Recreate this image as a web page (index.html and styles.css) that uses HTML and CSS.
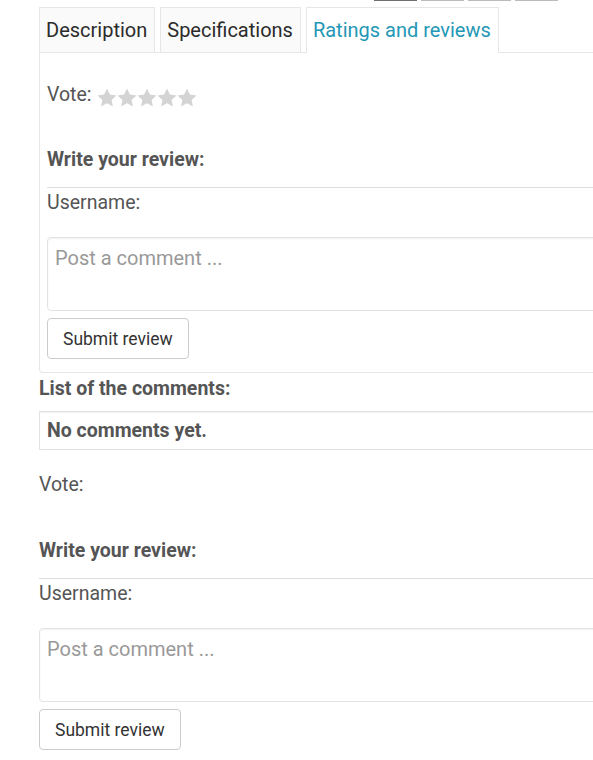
FILE: index.html
```html
<!DOCTYPE html>
<html lang="en">
<head>
    <meta charset="UTF-8">
    <meta name="viewport" content="width=device-width, initial-scale=1.0">
    <title>Ratings and reviews</title>
    <link rel="stylesheet" href="styles.css">
</head>
<body>
    <div class="page">
        <!-- thumbnail pager bars from the gallery above -->
        <div class="pager">
            <span class="pager-bar active"></span>
            <span class="pager-bar"></span>
            <span class="pager-bar"></span>
            <span class="pager-bar"></span>
        </div>

        <ul class="tabs">
            <li class="tab">Description</li>
            <li class="tab">Specifications</li>
            <li class="tab active">Ratings and reviews</li>
        </ul>

        <div class="tab-panel">
            <div class="vote">Vote:
                <span class="stars">
                    <svg viewBox="0 0 20 20"><path d="M10 .6l2.9 6 6.6.8-4.9 4.5 1.3 6.6L10 15.2l-5.9 3.3 1.3-6.6L.5 7.4l6.6-.8z"/></svg>
                    <svg viewBox="0 0 20 20"><path d="M10 .6l2.9 6 6.6.8-4.9 4.5 1.3 6.6L10 15.2l-5.9 3.3 1.3-6.6L.5 7.4l6.6-.8z"/></svg>
                    <svg viewBox="0 0 20 20"><path d="M10 .6l2.9 6 6.6.8-4.9 4.5 1.3 6.6L10 15.2l-5.9 3.3 1.3-6.6L.5 7.4l6.6-.8z"/></svg>
                    <svg viewBox="0 0 20 20"><path d="M10 .6l2.9 6 6.6.8-4.9 4.5 1.3 6.6L10 15.2l-5.9 3.3 1.3-6.6L.5 7.4l6.6-.8z"/></svg>
                    <svg viewBox="0 0 20 20"><path d="M10 .6l2.9 6 6.6.8-4.9 4.5 1.3 6.6L10 15.2l-5.9 3.3 1.3-6.6L.5 7.4l6.6-.8z"/></svg>
                </span>
            </div>
            <form class="review-form">
                <h4 class="form-title">Write your review:</h4>
                <hr class="divider">
                <label class="username">Username:</label>
                <textarea class="comment-box" placeholder="Post a comment ..."></textarea>
                <button type="button" class="submit-btn">Submit review</button>
            </form>
        </div>

        <h4 class="list-title">List of the comments:</h4>
        <div class="comments-box">No comments yet.</div>

        <!-- same form repeated below the list, no stars here -->
        <div class="vote vote-plain">Vote:</div>
        <form class="review-form">
            <h4 class="form-title">Write your review:</h4>
            <hr class="divider">
            <label class="username">Username:</label>
            <textarea class="comment-box" placeholder="Post a comment ..."></textarea>
            <button type="button" class="submit-btn">Submit review</button>
        </form>
    </div>
</body>
</html>
```

FILE: styles.css
```css
html, body {
    overflow: hidden;
}
body {
    margin: 0;
    font-family: Roboto, "Liberation Sans", sans-serif;
    color: #555;
    background: #fff;
}
.page {
    width: 640px;
    padding-left: 39px;
}
.pager {
    display: flex;
    gap: 4px;
    margin-left: 335px;
    height: 1px;
}
.pager-bar {
    width: 43px;
    height: 1px;
    background: #bbb;
}
.pager-bar.active {
    background: #6f6f6f;
}
.tabs {
    display: flex;
    list-style: none;
    margin: 6px 0 0;
    padding: 0;
    border-bottom: 1px solid #e6e6e6;
    gap: 5px;
}
.tab {
    height: 44px;
    line-height: 45px;
    padding: 0 7px 0 6px;
    font-size: 20px;
    color: #2b2b2b;
    background: #fafafa;
    border: 1px solid #e6e6e6;
    border-bottom: none;
    margin-bottom: -1px;
}
.tab.active {
    color: #2497b6;
    background: #fff;
    height: 45px;
}
.tab-panel {
    border: 1px solid #e6e6e6;
    border-top: none;
    border-radius: 0 0 4px 4px;
    padding: 29px 7px 13px;
}
.vote {
    font-size: 19.5px;
    line-height: 26px;
    display: flex;
    align-items: center;
    gap: 5px;
}
.stars {
    display: flex;
    margin-top: 6px;
}
.stars svg {
    width: 20px;
    height: 20px;
    fill: #d4d4d4;
}
.vote-plain {
    margin-top: 22px;
}
.review-form {
    display: flex;
    flex-direction: column;
    align-items: flex-start;
}
.form-title {
    margin: 39px 0 0;
    font-size: 19.5px;
    line-height: 26px;
    font-weight: bold;
    color: #555;
}
.vote-plain + .review-form .form-title {
    margin-top: 40px;
}
.divider {
    width: 100%;
    margin: 14px 0 0;
    border: none;
    border-top: 1px solid #dedede;
}
.username {
    margin-top: 2px;
    font-size: 19.5px;
    line-height: 26px;
}
.comment-box {
    box-sizing: border-box;
    width: 100%;
    height: 74px;
    margin-top: 21px;
    padding: 8px 7px;
    font-family: inherit;
    font-size: 20px;
    color: #555;
    border: 1px solid #e3e3e3;
    border-radius: 4px;
    box-shadow: inset 0 1px 2px rgba(0, 0, 0, 0.06);
    resize: none;
}
.comment-box::placeholder {
    color: #999;
}
.submit-btn {
    margin-top: 7px;
    height: 41px;
    padding: 0 15px;
    font-family: inherit;
    font-size: 17.5px;
    color: #333;
    background: #fff;
    border: 1px solid #ccc;
    border-radius: 4px;
}
.list-title {
    margin: 3px 0 0;
    font-size: 19.5px;
    line-height: 26px;
    font-weight: bold;
    color: #555;
}
.comments-box {
    margin-top: 9px;
    height: 37px;
    line-height: 38px;
    padding: 0 7px;
    font-size: 19.5px;
    font-weight: bold;
    border: 1px solid #e3e3e3;
    box-shadow: inset 0 1px 1px rgba(0, 0, 0, 0.05);
}
```
